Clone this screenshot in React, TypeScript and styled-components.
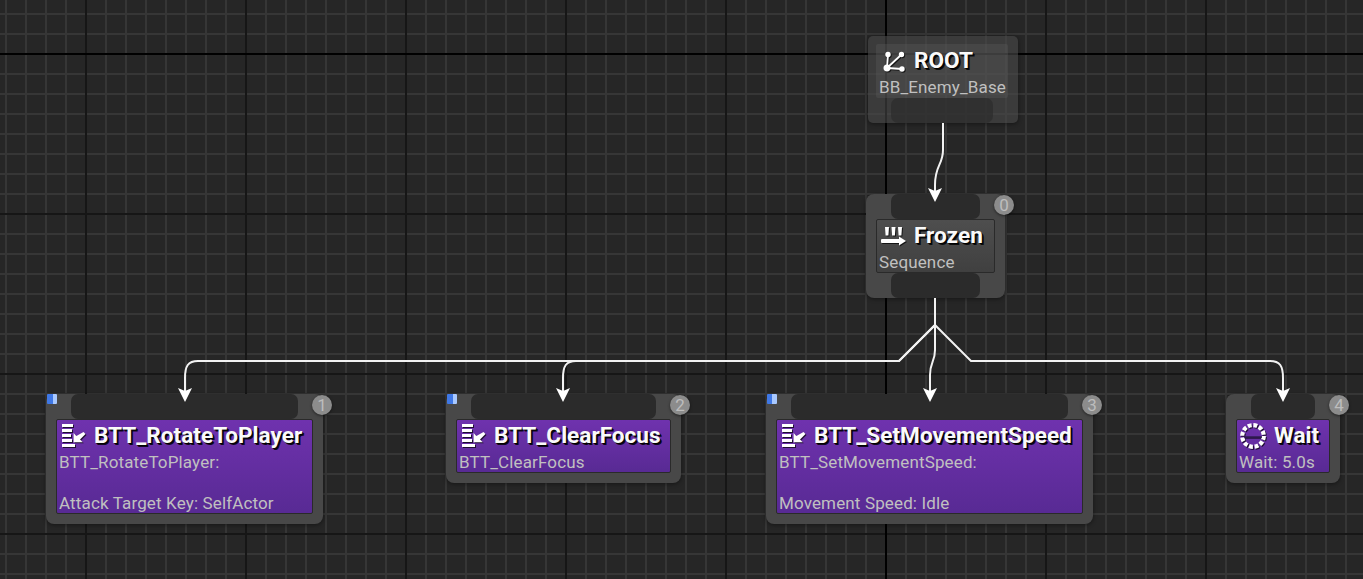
import React from 'react'
import styled, { createGlobalStyle } from 'styled-components'

const GlobalStyle = createGlobalStyle`
  html, body { margin: 0; padding: 0; background: #262626; overflow: hidden; }
`

const Canvas = styled.div`
  position: relative;
  width: 1363px;
  height: 579px;
  overflow: hidden;
  background-color: #262626;
  background-image:
    linear-gradient(#000, #000),
    linear-gradient(#000, #000),
    linear-gradient(to right, #161616 2px, transparent 2px),
    linear-gradient(to bottom, #161616 2px, transparent 2px),
    linear-gradient(to right, #363636 2px, transparent 2px),
    linear-gradient(to bottom, #363636 2px, transparent 2px);
  background-size: 2px 100%, 100% 2px, 160px 160px, 160px 160px, 20px 20px, 20px 20px;
  background-position: 885px 0, 0 53px, 85px 0, 0 53px, 5px 0, 0 13px;
  background-repeat: no-repeat, no-repeat, repeat, repeat, repeat, repeat;
`

const Wires = styled.svg`
  position: absolute;
  inset: 0;
  width: 1363px;
  height: 579px;
`

const Shell = styled.div<{ $x: number; $y: number; $w: number; $root?: boolean }>`
  position: absolute;
  left: ${p => p.$x}px;
  top: ${p => p.$y}px;
  width: ${p => p.$w}px;
  box-sizing: border-box;
  padding: 0 10px 0 ${p => (p.$root ? 8 : 10)}px;
  display: flex;
  flex-direction: column;
  border-radius: ${p => (p.$root ? 5 : 8)}px;
  background: ${p => (p.$root ? 'rgba(74, 74, 74, 0.6)' : '#484848')};
  box-shadow: 0 1px 4px rgba(0, 0, 0, 0.45);
`

const Pin = styled.div<{ $root?: boolean }>`
  height: 25px;
  margin: 0 15px;
  border-radius: 7px;
  background: ${p => (p.$root ? 'rgba(44, 44, 44, 0.7)' : '#2b2b2b')};
`

const Gap = styled.div<{ $h?: number }>`
  height: ${p => p.$h ?? 10}px;
`

const Body = styled.div<{ $tone: 'root' | 'composite' | 'task' }>`
  box-sizing: border-box;
  padding: 0 2px;
  border-radius: 2px;
  border: 1px solid ${p => (p.$tone === 'root' ? 'transparent' : '#2a2a2a')};
  background: ${p =>
    p.$tone === 'task'
      ? 'linear-gradient(#6f32ae, #582a94)'
      : p.$tone === 'composite'
        ? 'linear-gradient(#4e4e4e, #404040)'
        : 'rgba(92, 92, 92, 0.35)'};
`

const TitleRow = styled.div`
  display: flex;
  align-items: center;
  height: 32px;
  gap: 8px;
  padding-left: 1px;
`

const IconBox = styled.svg`
  width: 26px;
  height: 26px;
  flex: none;
  filter: drop-shadow(1px 1px 0 rgba(0, 0, 0, 0.7));
`

const Title = styled.span`
  font-family: Roboto, "Liberation Sans", sans-serif;
  font-weight: 700;
  font-size: 22.6px;
  line-height: 28px;
  color: #fafafa;
  white-space: nowrap;
  text-shadow: 2px 2px 0 rgba(0, 0, 0, 0.85), 1px 1px 0 rgba(0, 0, 0, 0.85);
`

const Sub = styled.div`
  font-family: Roboto, "Liberation Sans", sans-serif;
  font-size: 17px;
  line-height: 20.4px;
  letter-spacing: 0.14px;
  color: #c0c0c0;
  white-space: pre-line;
`

const Badge = styled.div`
  position: absolute;
  top: 1px;
  right: -9px;
  width: 20px;
  height: 20px;
  border-radius: 50%;
  background: #8c8c8c;
  color: #bdbdbd;
  font-family: Roboto, "Liberation Sans", sans-serif;
  font-size: 17px;
  line-height: 20px;
  text-align: center;
  box-shadow: 0 1px 3px rgba(0, 0, 0, 0.5);
`

const Flag = styled.div`
  position: absolute;
  top: 0;
  left: 1px;
  width: 10px;
  height: 10px;
  border-radius: 1px;
  background: linear-gradient(to right, #3f78e6 0 55%, #a8c8ff 55% 100%);
`

const RootIcon = () => (
  <IconBox viewBox="0 0 26 26">
    <g stroke="#fff" strokeWidth="1.8" fill="#fff">
      <line x1="7" y1="20" x2="8" y2="7" />
      <line x1="7" y1="20" x2="21" y2="7" />
      <line x1="7" y1="20" x2="22" y2="21" />
      <circle cx="8" cy="6.5" r="1.8" />
      <circle cx="21.5" cy="6.5" r="1.8" />
      <circle cx="22" cy="21" r="1.8" />
      <circle cx="7" cy="20" r="2.6" />
    </g>
  </IconBox>
)

const SequenceIcon = () => (
  <IconBox viewBox="0 0 26 26">
    <g fill="#fff">
      <path d="M5 4h4l-.6 8.5H5.6zM11.5 4h4l-.6 8.5h-2.8zM18 4h4l-.6 8.5h-2.8z" />
      <rect x="1" y="16" width="19" height="4" rx="1" />
      <path d="M19 13.5l7 4.5-7 4.5z" />
    </g>
  </IconBox>
)

const TaskIcon = () => (
  <IconBox viewBox="0 0 26 26">
    <g fill="#fff">
      <rect x="2" y="1" width="11" height="3" />
      <rect x="2" y="6" width="10" height="3" />
      <rect x="2" y="11" width="9" height="3" />
      <rect x="2" y="16" width="10" height="3" />
      <rect x="2" y="21" width="13" height="3" />
      <path d="M23.5 9l2 2-5.5 5.5 2.8 2.8H13.6v-9.2l2.8 2.8z" />
    </g>
  </IconBox>
)

const WaitIcon = () => (
  <IconBox viewBox="0 0 26 26">
    <circle cx="13" cy="13" r="10.8" fill="none" stroke="#fff" strokeWidth="4.2" strokeDasharray="3.9 1.76" />
    <path d="M4 14h18" stroke="#2a1a4a" strokeWidth="1.4" />
  </IconBox>
)

const Wire = styled.path`
  fill: none;
  stroke: #f2f2f2;
  stroke-width: 2;
`

const Head = styled.path`
  fill: #ffffff;
`

const Arrow = ({ x, y }: { x: number; y: number }) => (
  <Head d={`M${x - 7} ${y - 14} L${x} ${y - 11} L${x + 7} ${y - 14} L${x} ${y} Z`} />
)

type NodeProps = {
  x: number
  y: number
  w: number
  tone: 'composite' | 'task'
  icon: React.ReactNode
  title: string
  sub: string
  order: number
  flag?: boolean
}

const GraphNode = ({ x, y, w, tone, icon, title, sub, order, flag }: NodeProps) => (
  <Shell $x={x} $y={y} $w={w}>
    <Pin />
    <Body $tone={tone}>
      <TitleRow>
        {icon}
        <Title>{title}</Title>
      </TitleRow>
      <Sub>{sub}</Sub>
    </Body>
    {tone === 'composite' ? <Pin /> : <Gap />}
    <Badge>{order}</Badge>
    {flag && <Flag />}
  </Shell>
)

const App = () => (
  <Canvas>
    <GlobalStyle />
    <Shell $x={868} $y={36} $w={150} $root>
      <Gap $h={8} />
      <Body $tone="root">
        <TitleRow>
          <RootIcon />
          <Title>ROOT</Title>
        </TitleRow>
        <Sub>BB_Enemy_Base</Sub>
      </Body>
      <Pin $root />
    </Shell>
    <GraphNode x={866} y={194} w={139} tone="composite" icon={<SequenceIcon />} title="Frozen" sub="Sequence" order={0} />
    <GraphNode
      x={46}
      y={394}
      w={277}
      tone="task"
      icon={<TaskIcon />}
      title="BTT_RotateToPlayer"
      sub={'BTT_RotateToPlayer:\n\nAttack Target Key: SelfActor'}
      order={1}
      flag
    />
    <GraphNode x={446} y={394} w={235} tone="task" icon={<TaskIcon />} title="BTT_ClearFocus" sub="BTT_ClearFocus" order={2} flag />
    <GraphNode
      x={766}
      y={394}
      w={327}
      tone="task"
      icon={<TaskIcon />}
      title="BTT_SetMovementSpeed"
      sub={'BTT_SetMovementSpeed:\n\nMovement Speed: Idle'}
      order={3}
      flag
    />
    <GraphNode x={1226} y={394} w={114} tone="task" icon={<WaitIcon />} title="Wait" sub="Wait: 5.0s" order={4} />
    <Wires viewBox="0 0 1363 579">
      <Wire d="M943 123 V150 C943 165 935 165 935 185 V192" />
      <Arrow x={935} y={202} />
      <Wire d="M935 298 V325 L899 361 H198 C188 361 185 366 185 378 V392" />
      <Wire d="M935 298 V325 L899 361 H576 C566 361 563 366 563 378 V392" />
      <Wire d="M935 298 V350 C935 362 930 362 930 375 V392" />
      <Wire d="M935 325 L971 361 H1270 C1280 361 1283 366 1283 378 V392" />
      <Arrow x={185} y={402} />
      <Arrow x={563} y={402} />
      <Arrow x={930} y={402} />
      <Arrow x={1283} y={402} />
    </Wires>
  </Canvas>
)

export default App
